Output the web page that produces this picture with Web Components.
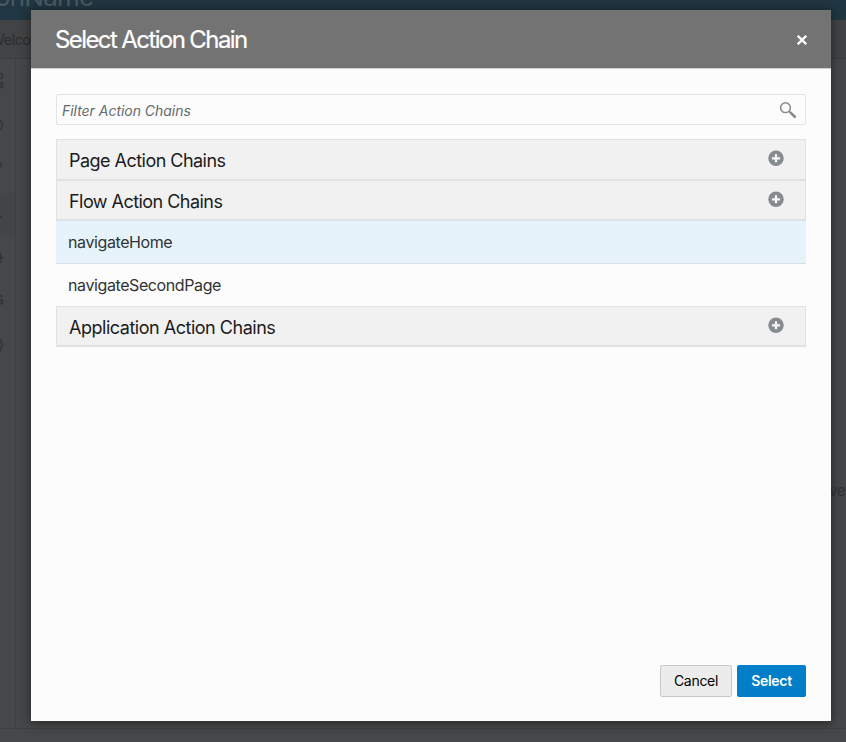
<!DOCTYPE html>
<html lang="en"><head><meta charset="utf-8"><title>Select Action Chain</title>
<style>html,body{margin:0;height:100%;overflow:hidden;background:#464749;font-family:Inter,"Liberation Sans",sans-serif}</style></head>
<body>
<app-backdrop></app-backdrop>
<chain-dialog>
  <span slot="title">Select Action Chain</span>
  <filter-box>Filter Action Chains</filter-box>
  <div class="groups">
    <chain-group style="--b:1px">Page Action Chains</chain-group>
    <chain-group style="--ls:-.54px">Flow Action Chains</chain-group>
    <chain-item selected>navigateHome</chain-item>
    <chain-item>navigateSecondPage</chain-item>
    <chain-group style="--ls:-.48px">Application Action Chains</chain-group>
  </div>
  <dialog-button slot="actions">Cancel</dialog-button>
  <dialog-button slot="actions" primary>Select</dialog-button>
</chain-dialog>
<script>
const define=(name,html)=>customElements.define(name,class extends HTMLElement{
  constructor(){super();this.attachShadow({mode:'open'}).innerHTML=html;}
});
define('app-backdrop',`<style>
:host{position:absolute;inset:0;display:grid;grid-template-rows:20px 39px 1fr 14px;overflow:hidden;color:#2b2c2e}
.bar{background:#203642;overflow:hidden;position:relative}
.bar span{position:absolute;left:-5px;top:-17px;font-size:26px;line-height:28px;letter-spacing:-.8px;color:#4b5961;white-space:nowrap}
.tabs{background:#424345;border-bottom:1px solid #3d3e40;font-size:14px;line-height:40px}
.tabs span{margin-left:-9px;letter-spacing:-.3px}
.body{display:grid;grid-template-columns:16px 1fr;position:relative}
.rail{border-right:1px solid #3e3f41;overflow:hidden}
.rail svg{display:block}
.over{position:absolute;left:829px;top:423px;font-size:15px;line-height:18px;letter-spacing:-.4px;color:#303133}
.foot{border-top:1px solid #3e3f41;box-sizing:border-box}
</style>
<div class="bar"><span>onName</span></div><div class="tabs"><span>Welcome</span></div>
<div class="body"><div class="rail"><svg width="15" height="310" fill="none" stroke="#343537" stroke-width="1.500">
<path d="M0 134h15v42H0z" fill="#434446" stroke="none"/>
<circle cx="0" cy="17" r="2.600"/><path d="M-2 23.500h4.500v5h-4.500"/><path d="M-2 25.800h4.500"/>
<circle cx="-3" cy="66" r="5.500"/><path d="M-1 104.500h2v4"/>
<path d="M-2 152l2.500 3"/><path d="M-2 158h4" stroke="#203b4a" stroke-width="2"/>
<path d="M.5 194v10M-1 198.500h4" stroke-width="2"/><path d="M3 237.500q-4-2-4 1t3 3q2 4-3 3" stroke-width="1.800"/><path d="M0 280q2 1 1 4l2 2-2 2q1 3-1 4"/>
</svg></div><div class="canvas"></div><span class="over">ver</span></div><div class="foot"></div>`);
define('chain-dialog',`<style>
:host{position:absolute;left:31px;top:10px;width:800px;height:711px;background:#fcfcfc;box-shadow:0 1px 9px 1px rgba(20,20,15,.6);display:flex;flex-direction:column}
header{box-sizing:border-box;height:59px;padding:2px 24px 0;background:#737373;border-bottom:1px solid #cfcfcf;display:flex;align-items:center;justify-content:space-between;flex:none;color:#fff;font-size:24px;letter-spacing:-1.600px;line-height:56px;-webkit-text-stroke:.2px #fff}
main{padding:25px 25px 0;flex:1}
footer{display:flex;justify-content:flex-end;gap:5px;padding:0 25px 24px}
</style>
<header><slot name="title"></slot><svg width="10" height="10" viewBox="0 0 10 10" stroke="#fff" stroke-width="2.300" fill="none"><path d="M.8.8l8.400 8.400M9.200.8L.8 9.200"/></svg></header>
<main><slot></slot></main><footer><slot name="actions"></slot></footer>`);
define('filter-box',`<style>
:host{display:flex;box-sizing:border-box;height:31px;border:1px solid #e2e4e5;border-radius:2px;align-items:center;justify-content:space-between;padding:1px 8px 0 5px;margin-bottom:14px;font-size:14px;font-style:italic;color:#666a6d;letter-spacing:-.03px}
svg{display:block}
</style><span><slot></slot></span><svg width="18" height="18" viewBox="0 0 18 18" fill="none" stroke="#868a8d"><circle cx="6.500" cy="6.700" r="4.900" stroke-width="1.500"/><path d="M9.800 10.100l1.400 1.400" stroke-width="1.300"/><path d="M11.500 11.600l4.300 4.200" stroke-width="2.600" stroke-linecap="round"/></svg>`);
define('chain-group',`<style>
:host{display:flex;box-sizing:border-box;height:41px;border:1px solid #e0e2e2;border-bottom-width:var(--b,2px);background:#f1f1f1;align-items:flex-start;justify-content:space-between;padding:0 21px 0 12px;font-size:18px;line-height:41px;color:#1b1b1b;letter-spacing:var(--ls,-.530px)}
svg{margin-top:10px}
</style><span><slot></slot></span><svg width="16" height="16" viewBox="0 0 16 16"><circle cx="8" cy="8.300" r="7.700" fill="#868b8e"/><path d="M8 4.300v8M4 8.300h8" stroke="#f7f7f7" stroke-width="2.200"/></svg>`);
define('chain-item',`<style>
:host{display:block;height:42px;padding-left:12px;font-size:16px;line-height:43px;color:#303335;letter-spacing:-.4px}
:host([selected]){background:#e7f3fa;border-bottom:1px solid #d9dee0}
</style><slot></slot>`);
define('dialog-button',`<style>
:host{display:block;box-sizing:border-box;width:72px;height:32px;border:1px solid #c8caca;border-radius:2px;background:#ececec;color:#000;text-align:center;font-size:14px;line-height:30px;letter-spacing:-.3px}
:host([primary]){width:69px;background:#027dc7;border-color:#027dc7;color:#fff;font-weight:600}
</style><slot></slot>`);
</script></body></html>
